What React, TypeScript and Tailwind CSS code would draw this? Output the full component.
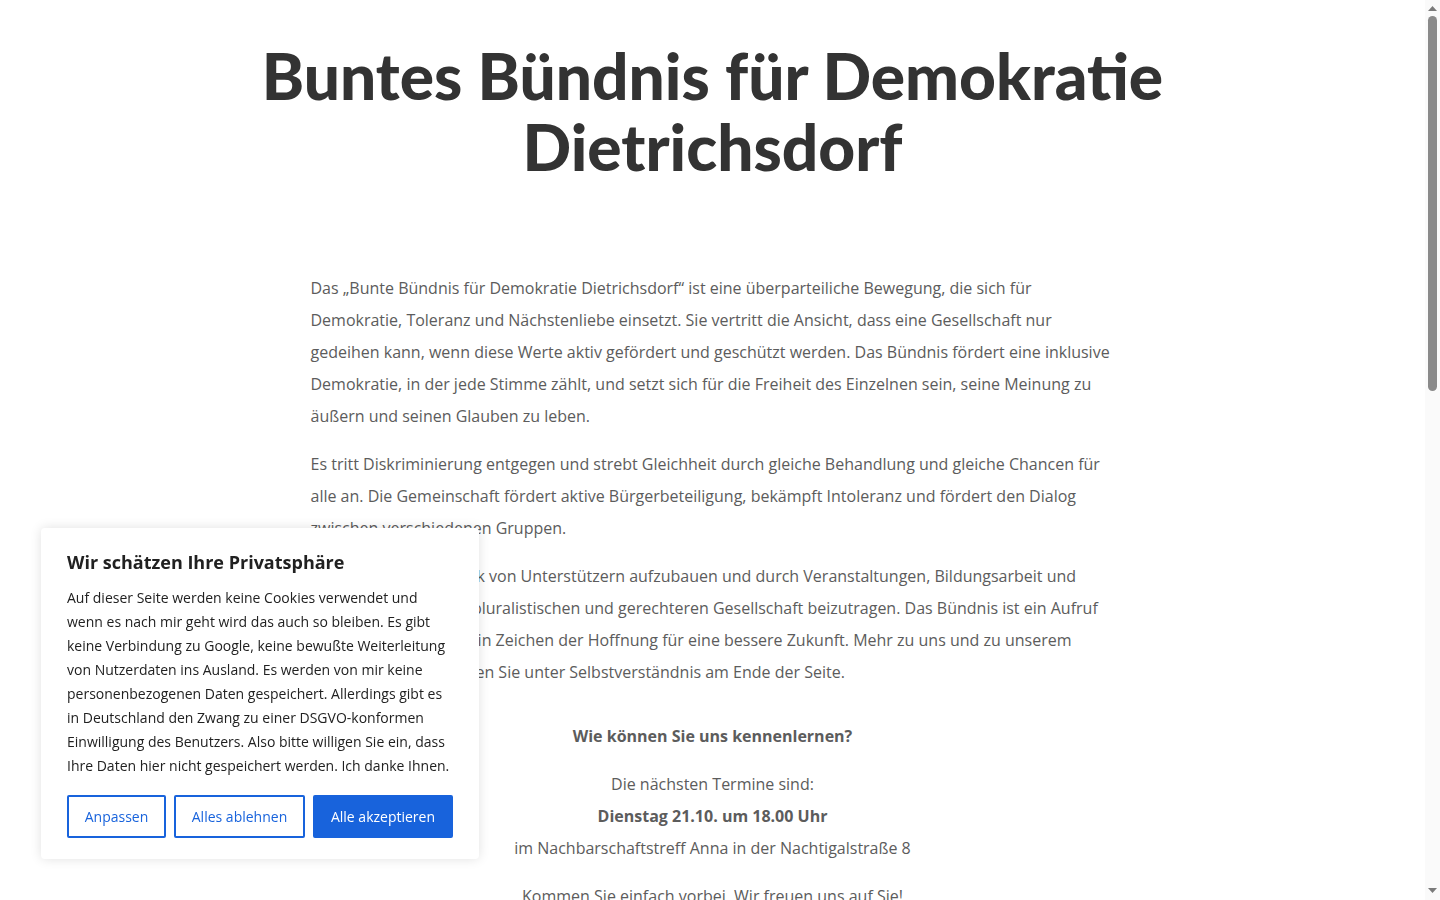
import React from "react";

function CookieBanner() {
  return (
    <div className="fixed left-[41px] bottom-[41px] w-[438px] rounded bg-white px-[26px] pt-[20px] pb-[21px] shadow-[0_0_12px_rgba(0,0,0,0.12)] font-['Open_Sans',sans-serif] text-[#212121]">
      <p className="text-[18px] font-bold leading-[28px]">Wir schätzen Ihre Privatsphäre</p>
      <p className="mt-[10px] text-[14px] leading-[24px]">
        Auf dieser Seite werden keine Cookies verwendet und wenn es nach mir geht wird das auch so bleiben. Es gibt keine
        Verbindung zu Google, keine bewußte Weiterleitung von Nutzerdaten ins Ausland. Es werden von mir keine
        personenbezogenen Daten gespeichert. Allerdings gibt es in Deutschland den Zwang zu einer DSGVO-konformen
        Einwilligung des Benutzers. Also bitte willigen Sie ein, dass Ihre Daten hier nicht gespeichert werden. Ich
        danke Ihnen.
      </p>
      <div className="mt-[17px] flex gap-[8px]">
        <button className="h-[43px] w-[99px] rounded-[2px] border-2 border-[#1863dc] text-[14px] text-[#1863dc]">
          Anpassen
        </button>
        <button className="h-[43px] w-[131px] rounded-[2px] border-2 border-[#1863dc] text-[14px] text-[#1863dc]">
          Alles ablehnen
        </button>
        <button className="h-[43px] w-[140px] rounded-[2px] border-2 border-[#1863dc] bg-[#1863dc] text-[14px] text-white">
          Alle akzeptieren
        </button>
      </div>
    </div>
  );
}

// the browser's scrollbar from the screenshot (headless hides the real one)
function Scrollbar() {
  return (
    <div className="fixed top-0 right-0 flex h-screen w-[15px] flex-col items-center bg-[#fafafa]">
      <svg width="9" height="6" viewBox="0 0 9 6" className="mt-[6px] shrink-0">
        <path d="M0 5 L4.5 0 L9 5 Z" fill="#7a7a7a" />
      </svg>
      <div className="mt-[4px] h-[375px] w-[9px] shrink-0 rounded-full bg-[#8a8a8a]" />
      <div className="flex-1" />
      <svg width="9" height="6" viewBox="0 0 9 6" className="mb-[6px] shrink-0">
        <path d="M0 0 L9 0 L4.5 5 Z" fill="#7a7a7a" />
      </svg>
    </div>
  );
}

export default function App() {
  return (
    <div className="min-h-screen bg-white pr-[15px]">
      <header className="pt-[40px] pb-[90px]">
        <h1 className="mx-auto max-w-[1040px] text-center font-['Lato',sans-serif] text-[64px] font-black leading-[71px] text-[#333333]">
          Buntes Bündnis für Demokratie
          <br />
          Dietrichsdorf
        </h1>
      </header>

      <main className="mx-auto w-[804px] font-['Open_Sans',sans-serif] text-[16px] leading-[32px] text-[#5c5c5c]">
        <p className="mb-[16px]">
          Das „Bunte Bündnis für Demokratie Dietrichsdorf“ ist eine überparteiliche Bewegung, die sich für Demokratie,
          Toleranz und Nächstenliebe einsetzt. Sie vertritt die Ansicht, dass eine Gesellschaft nur gedeihen kann, wenn
          diese Werte aktiv gefördert und geschützt werden. Das Bündnis fördert eine inklusive Demokratie, in der jede
          Stimme zählt, und setzt sich für die Freiheit des Einzelnen sein, seine Meinung zu äußern und seinen Glauben
          zu leben.
        </p>
        <p className="mb-[16px]">
          Es tritt Diskriminierung entgegen und strebt Gleichheit durch gleiche Behandlung und gleiche Chancen für alle
          an. Die Gemeinschaft fördert aktive Bürgerbeteiligung, bekämpft Intoleranz und fördert den Dialog zwischen
          verschiedenen Gruppen.
        </p>
        <p className="mb-[16px]">
          Ziel ist es, ein Netzwerk von Unterstützern aufzubauen und durch Veranstaltungen, Bildungsarbeit und
          <br />
          Engagement zu einer pluralistischen und gerechteren Gesellschaft beizutragen. Das Bündnis ist ein Aufruf
          <br />
          zum Mitmachen und ein Zeichen der Hoffnung für eine bessere Zukunft. Mehr zu uns und zu unserem
          <br />
          Selbstverständnis finden Sie unter Selbstverständnis am Ende der Seite.
        </p>

        <div className="pt-[16px] text-center">
          <p className="mb-[16px] font-bold">Wie können Sie uns kennenlernen?</p>
          <p>Die nächsten Termine sind:</p>
          <p className="font-bold">Dienstag 21.10. um 18.00 Uhr</p>
          <p className="mb-[16px]">im Nachbarschaftstreff Anna in der Nachtigalstraße 8</p>
          <p className="mb-[16px]">Kommen Sie einfach vorbei. Wir freuen uns auf Sie!</p>
        </div>

        <section className="pt-[48px] pb-[120px]">
          <h2 className="mb-[16px] text-center text-[28px] font-bold leading-[40px] text-[#333333]">Aktuelles</h2>
          <p className="mb-[16px]">
            Hier finden Sie Informationen zu unseren aktuellen Aktionen, Veranstaltungen und Treffen im Stadtteil.
            Wir laden alle Bürgerinnen und Bürger herzlich ein, sich zu beteiligen und mitzuwirken.
          </p>
          <p className="mb-[16px]">
            Gemeinsam gestalten wir ein offenes, vielfältiges und solidarisches Dietrichsdorf, in dem sich alle
            Menschen willkommen fühlen.
          </p>
          <h2 className="mt-[48px] mb-[16px] text-center text-[28px] font-bold leading-[40px] text-[#333333]">
            Selbstverständnis
          </h2>
          <p className="mb-[16px]">
            Wir verstehen uns als ein offenes Bündnis von Menschen, Vereinen, Initiativen und Gemeinden, die sich für
            ein friedliches und respektvolles Miteinander einsetzen. Wir sind parteipolitisch unabhängig und treten
            für die Werte des Grundgesetzes ein.
          </p>
          <p className="mb-[16px]">
            Jede und jeder, der diese Werte teilt, ist herzlich eingeladen, bei uns mitzumachen. Wir treffen uns
            regelmäßig, planen gemeinsame Aktionen und tauschen uns über die Entwicklung in unserem Stadtteil aus.
          </p>
          <p className="mb-[16px]">
            Kontakt: Bitte sprechen Sie uns bei einem unserer Treffen an oder schreiben Sie uns eine Nachricht.
          </p>
          <p className="mb-[16px]">Impressum · Datenschutzerklärung</p>
        </section>
      </main>

      <CookieBanner />
      <Scrollbar />
    </div>
  );
}
